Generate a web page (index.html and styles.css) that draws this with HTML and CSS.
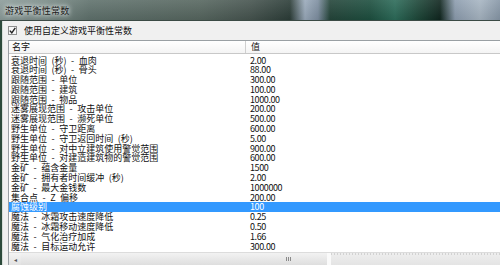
FILE: index.html
```html
<!DOCTYPE html>
<html lang="zh">
<head>
<meta charset="utf-8">
<link rel="stylesheet" href="styles.css">
</head>
<body>
<div class="window">
  <div class="titlebar"><span class="title">游戏平衡性常数</span></div>
  <div class="frame">
    <div class="content">
      <label class="check-row">
        <span class="checkbox">
          <svg width="7" height="7" viewBox="0 0 7 7"><path d="M0.8 3.6 L2.8 5.8 L6.3 0.8" fill="none" stroke="#222" stroke-width="1.4"/></svg>
        </span>
        <span class="check-label">使用自定义游戏平衡性常数</span>
      </label>
      <div class="list">
        <div class="header">
          <div class="hcell name-col">名字</div>
          <div class="hcell value-col">值</div>
        </div>
        <div class="rows">
          <div class="row"><span class="name">衰退时间 (秒) - 血肉</span><span class="val">2.00</span></div>
          <div class="row"><span class="name">衰退时间 (秒) - 骨头</span><span class="val">88.00</span></div>
          <div class="row"><span class="name">跟随范围 - 单位</span><span class="val">300.00</span></div>
          <div class="row"><span class="name">跟随范围 - 建筑</span><span class="val">100.00</span></div>
          <div class="row"><span class="name">跟随范围 - 物品</span><span class="val">1000.00</span></div>
          <div class="row"><span class="name">迷雾展现范围 - 攻击单位</span><span class="val">200.00</span></div>
          <div class="row"><span class="name">迷雾展现范围 - 濒死单位</span><span class="val">500.00</span></div>
          <div class="row"><span class="name">野生单位 - 守卫距离</span><span class="val">600.00</span></div>
          <div class="row"><span class="name">野生单位 - 守卫返回时间 (秒)</span><span class="val">5.00</span></div>
          <div class="row"><span class="name">野生单位 - 对中立建筑使用警觉范围</span><span class="val">900.00</span></div>
          <div class="row"><span class="name">野生单位 - 对建造建筑物的警觉范围</span><span class="val">600.00</span></div>
          <div class="row"><span class="name">金矿 - 蕴含金量</span><span class="val">1500</span></div>
          <div class="row"><span class="name">金矿 - 拥有者时间缓冲 (秒)</span><span class="val">2.00</span></div>
          <div class="row"><span class="name">金矿 - 最大金钱数</span><span class="val">1000000</span></div>
          <div class="row"><span class="name">集合点 - Z 偏移</span><span class="val">200.00</span></div>
          <div class="row selected"><span class="name">腐蚀级别</span><span class="val">100</span></div>
          <div class="row"><span class="name">魔法 - 冰霜攻击速度降低</span><span class="val">0.25</span></div>
          <div class="row"><span class="name">魔法 - 冰霜移动速度降低</span><span class="val">0.50</span></div>
          <div class="row"><span class="name">魔法 - 气化治疗加成</span><span class="val">1.66</span></div>
          <div class="row"><span class="name">魔法 - 目标运动允许</span><span class="val">300.00</span></div>
        </div>
        <div class="hscroll">
          <div class="arrow">◂</div>
          <div class="thumb"><span class="grip"></span></div>
          <div class="track"></div>
        </div>
      </div>
    </div>
  </div>
</div>
</body>
</html>
```

FILE: styles.css
```css
html, body {
  margin: 0;
  padding: 0;
}
body {
  width: 500px;
  height: 265px;
  overflow: hidden;
  background: #f0f0f0;
  font-family: "Noto Sans CJK SC", "Noto Sans", sans-serif;
  font-size: 9px;
  color: #111;
}
.window {
  display: flex;
  flex-direction: column;
  height: 265px;
}
.titlebar {
  height: 20px;
  flex: none;
  display: flex;
  align-items: center;
  padding-left: 5px;
  background:
    linear-gradient(180deg, rgba(255,255,255,0.10), rgba(0,0,0,0.08)),
    linear-gradient(90deg, #8c9c9a 0px, #7d8e8a 40px, #5f716c 90px, #56665f 200px, #46544f 250px, #2c3d38 290px, #9aaabb 305px, #7d8ea0 318px, #24453a 330px, #1d4f3f 370px, #2c6b59 395px, #1c4436 420px, #10261f 440px, #8c9cae 455px, #a7b5c2 480px, #8696a6 500px);
  border-bottom: 1px solid #3b4a45;
}
.title {
  color: #1c1c1c;
  text-shadow: 0 0 4px #e8eeee, 0 0 6px #e8eeee;
  letter-spacing: 0.2px;
}
.frame {
  flex: 1;
  display: flex;
  border-left: 2px solid #2c4a3b;
  min-height: 0;
}
.content {
  flex: 1;
  display: flex;
  flex-direction: column;
  border-left: 1px solid #d6ddd8;
  min-width: 0;
}
.check-row {
  height: 19px;
  display: flex;
  align-items: center;
  padding-left: 5px;
  gap: 7px;
}
.checkbox {
  width: 7px;
  height: 7px;
  border: 1px solid #8e8f8f;
  background: #f6f6f6;
  display: flex;
  align-items: center;
  justify-content: center;
}
.check-label {
  line-height: 12px;
}
.list {
  flex: 1;
  margin-left: 5px;
  border-left: 1px solid #9aa0a4;
  background: #fff;
  display: flex;
  flex-direction: column;
  min-height: 0;
}
.header {
  height: 12px;
  flex: none;
  display: flex;
  border-top: 1px solid #9aa0a4;
  border-bottom: 1px solid #c8c8c8;
  background: linear-gradient(180deg, #ffffff, #f4f4f4);
}
.hcell {
  line-height: 12px;
}
.name-col {
  width: 233px;
  padding-left: 3px;
  border-right: 1px solid #cfcfcf;
}
.value-col {
  padding-left: 5px;
}
.rows {
  padding-top: 1.5px;
  flex: none;
}
.row {
  height: 9.8px;
  line-height: 9.8px;
  display: flex;
  white-space: nowrap;
}
.row .name {
  width: 239px;
  padding-left: 2px;
  flex: none;
  word-spacing: 2.5px;
}
.row .val {
  letter-spacing: -0.4px;
}
.row.selected {
  background: #3399ff;
  color: #fff;
}
.hscroll {
  margin-top: auto;
  height: 12px;
  flex: none;
  display: flex;
  background: #ececec;
  border-top: 1px solid #dcdcdc;
}
.arrow {
  width: 12px;
  display: flex;
  align-items: center;
  justify-content: center;
  font-size: 6px;
  color: #555;
  background: linear-gradient(180deg, #f4f4f4, #e2e2e2);
}
.thumb {
  width: 310px;
  display: flex;
  align-items: center;
  justify-content: flex-end;
  padding-right: 36px;
  box-sizing: border-box;
  background: linear-gradient(180deg, #f2f2f2, #dedede);
  border-right: 4px solid #fafafa;
}
.grip {
  width: 5px;
  height: 4px;
  background: repeating-linear-gradient(90deg, #8a8a8a 0 1px, transparent 1px 2px);
}
.track {
  flex: 1;
  background:
    repeating-linear-gradient(90deg, rgba(160,160,160,0.35) 0 1px, transparent 1px 3px) top/100% 2px no-repeat,
    linear-gradient(180deg, #eeeeee, #e4e4e4);
}
```
